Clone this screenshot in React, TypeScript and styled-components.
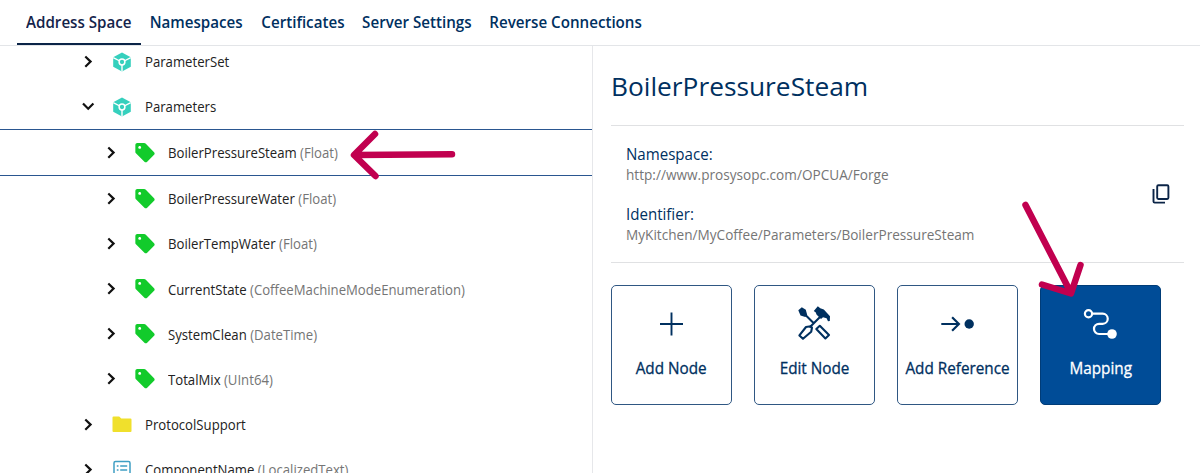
import React from "react";
import styled, { createGlobalStyle, css } from "styled-components";

const GlobalStyle = createGlobalStyle`
  * { box-sizing: border-box; }
  body {
    margin: 0;
    background: #fff;
    font-family: "Open Sans", "Noto Sans", sans-serif;
    overflow: hidden;
  }
`;

const Page = styled.div`
  position: relative;
  display: flex;
  flex-direction: column;
  height: 473px;
  overflow: hidden;
`;

const Condensed = styled.span<{ $scale: number; $origin?: string }>`
  display: inline-block;
  transform: scaleX(${(p) => p.$scale});
  transform-origin: ${(p) => p.$origin ?? "left"} center;
`;

const TabBar = styled.nav`
  display: flex;
  flex: none;
  height: 46px;
  padding-left: 17px;
  border-bottom: 1px solid #e3e5e8;
`;

const Tab = styled.a<{ $active?: boolean; $width: number }>`
  display: flex;
  justify-content: center;
  width: ${(p) => p.$width}px;
  height: 45px;
  padding-top: 11px;
  font-size: 16px;
  line-height: 22px;
  font-weight: 600;
  white-space: nowrap;
  color: ${(p) => (p.$active ? "#14244b" : "#00305f")};
  border-bottom: 2px solid ${(p) => (p.$active ? "#0b2447" : "transparent")};
`;

const Content = styled.div`
  display: flex;
  flex: 1;
  min-height: 0;
`;

const Tree = styled.div`
  flex: none;
  width: 593px;
  border-right: 1.5px solid #e6e7ea;
  overflow: hidden;
`;

const TreeList = styled.div`
  margin-top: -7px;
`;

const Row = styled.div<{ $level: number; $selected?: boolean }>`
  display: flex;
  align-items: center;
  height: ${(p) => (p.$selected ? 47 : 45.15)}px;
  padding-left: ${(p) => 76.8 + p.$level * 22.7}px;
  ${(p) =>
    p.$selected &&
    css`
      border-top: 1px solid #2a5690;
      border-bottom: 1px solid #2a5690;
    `}
`;

const Chevron = styled.svg`
  flex: none;
  width: 22px;
  height: 22px;
  margin-right: 12px;
  fill: none;
  stroke: #111;
  stroke-width: 2.2;
`;

const NodeIcon = styled.svg`
  flex: none;
  width: 22px;
  height: 22px;
  margin-right: 12px;
`;

const NodeLabel = styled.span`
  padding-top: 1px;
  font-size: 14px;
  line-height: 20px;
  color: #222;
  white-space: nowrap;
  transform: scaleX(0.94);
  transform-origin: left center;
`;

const TypeName = styled.span`
  color: #757575;
`;

const Details = styled.section`
  flex: 1;
  padding: 0 16px 0 18px;
`;

const Title = styled.h1`
  margin: 0;
  height: 80px;
  padding-top: 22px;
  font-size: 26.3px;
  line-height: 36px;
  font-weight: 400;
  color: #00305f;
  border-bottom: 1px solid #e0e1e3;
`;

const Info = styled.div`
  display: flex;
  justify-content: space-between;
  align-items: center;
  height: 136.5px;
  padding: 0 13px 0 15px;
  border-bottom: 1px solid #e0e1e3;
`;

const Fields = styled.dl`
  display: grid;
  gap: 20px;
  margin: 0;
`;

const Term = styled.dt`
  font-size: 16px;
  line-height: 21px;
  color: #00305f;
`;

const Value = styled.dd`
  margin: 0;
  font-size: 14px;
  line-height: 19px;
  color: #757575;
`;

const CopyIcon = styled.svg`
  width: 20px;
  height: 22px;
  fill: none;
  stroke: #0b2447;
`;

const Actions = styled.div`
  display: flex;
  gap: 22.5px;
  padding-top: 22.5px;
`;

const Action = styled.button<{ $primary?: boolean }>`
  display: flex;
  flex-direction: column;
  align-items: center;
  flex: none;
  width: 120.5px;
  height: 120px;
  padding: 17.5px 0 0;
  border: 1px solid ${(p) => (p.$primary ? "#003c78" : "#2f5783")};
  border-radius: 5px;
  background: ${(p) => (p.$primary ? "#004c97" : "#fff")};
  color: ${(p) => (p.$primary ? "#fff" : "#00305f")};
  font-family: inherit;
  font-size: 16px;
  font-weight: 400;
  -webkit-text-stroke: 0.3px currentColor;
  line-height: 22px;
  white-space: nowrap;
`;

const ActionIcon = styled.svg`
  width: 40px;
  height: 40px;
  margin-bottom: 13px;
  fill: none;
  stroke: currentColor;
`;

const Arrows = styled.svg`
  position: absolute;
  inset: 0;
  width: 1200px;
  height: 473px;
  fill: none;
  stroke: #c1004f;
  stroke-width: 6.5;
  stroke-linecap: round;
  stroke-linejoin: round;
  pointer-events: none;
`;

type Kind = "object" | "variable" | "folder" | "property";

function Glyph({ kind }: { kind: Kind }) {
  if (kind === "object")
    return (
      <NodeIcon viewBox="0 0 22 22">
        <path d="M11 1.6 19.8 6.3V15.7L11 20.4 2.2 15.7V6.3Z" fill="#35d0bd" />
        <path d="M2.2 6.6 8.8 10M19.8 6.6 13.2 10M11 13.5V20.5" stroke="#fff" strokeWidth="1.4" fill="none" />
        <circle cx="11" cy="11" r="2.9" fill="#35d0bd" stroke="#fff" strokeWidth="1.5" />
      </NodeIcon>
    );
  if (kind === "variable")
    return (
      <NodeIcon viewBox="0.6 0.9 22.8 22.8">
        <path
          fill="#12cb2b"
          d="M21.41 11.41l-8.83-8.83c-.37-.37-.88-.58-1.41-.58H4c-1.1 0-2 .9-2 2v7.17c0 .53.21 1.04.59 1.41l8.83 8.83c.78.78 2.05.78 2.83 0l7.17-7.17c.78-.78.78-2.04-.01-2.83zM6.5 8C5.67 8 5 7.33 5 6.5S5.67 5 6.5 5 8 5.67 8 6.5 7.33 8 6.5 8z"
        />
      </NodeIcon>
    );
  if (kind === "folder")
    return (
      <NodeIcon viewBox="0 0 22 22">
        <path d="M1.5 3.4Q1.5 2.4 2.5 2.4H8.2L10.3 4.4H19.5Q20.5 4.4 20.5 5.4V17Q20.5 18 19.5 18H2.5Q1.5 18 1.5 17Z" fill="#f0e02c" />
      </NodeIcon>
    );
  return (
    <NodeIcon viewBox="0 0 22 22" fill="none" stroke="#3f9fc4" strokeWidth="1.5">
      <rect x="3" y="2.6" width="16" height="16.5" rx="1.5" />
      <path d="M5.8 7H7.5M5.8 10.9H7.5M5.8 14.8H7.5M9.2 7H16.2M9.2 10.9H16.2M9.2 14.8H16.2" />
    </NodeIcon>
  );
}

const nodes: { name: string; type?: string; kind: Kind; level: number; open?: boolean; selected?: boolean }[] = [
  { name: "ParameterSet", kind: "object", level: 0 },
  { name: "Parameters", kind: "object", level: 0, open: true },
  { name: "BoilerPressureSteam", type: "Float", kind: "variable", level: 1, selected: true },
  { name: "BoilerPressureWater", type: "Float", kind: "variable", level: 1 },
  { name: "BoilerTempWater", type: "Float", kind: "variable", level: 1 },
  { name: "CurrentState", type: "CoffeeMachineModeEnumeration", kind: "variable", level: 1 },
  { name: "SystemClean", type: "DateTime", kind: "variable", level: 1 },
  { name: "TotalMix", type: "UInt64", kind: "variable", level: 1 },
  { name: "ProtocolSupport", kind: "folder", level: 0 },
  { name: "ComponentName", type: "LocalizedText", kind: "property", level: 0 },
];

const tabs = [
  { label: "Address Space", width: 124, active: true },
  { label: "Namespaces", width: 111 },
  { label: "Certificates", width: 101 },
  { label: "Server Settings", width: 128 },
  { label: "Reverse Connections", width: 170 },
];

const fields = [
  { term: "Namespace:", value: "http://www.prosysopc.com/OPCUA/Forge" },
  { term: "Identifier:", value: "MyKitchen/MyCoffee/Parameters/BoilerPressureSteam" },
];

function ActionLabel({ children }: { children: React.ReactNode }) {
  return (
    <Condensed $scale={0.955} $origin="center">
      {children}
    </Condensed>
  );
}

export default function App() {
  return (
    <>
      <GlobalStyle />
      <Page>
        <TabBar>
          {tabs.map((t) => (
            <Tab key={t.label} $active={t.active} $width={t.width}>
              <Condensed $scale={0.946} $origin="center">
                {t.label}
              </Condensed>
            </Tab>
          ))}
        </TabBar>
        <Content>
          <Tree>
            <TreeList>
              {nodes.map((n) => (
                <Row key={n.name} $level={n.level} $selected={n.selected}>
                  <Chevron viewBox="0 0 22 22">
                    <path d={n.open ? "M6 7.5 11.2 12.7 16.4 7.5" : "M8.3 5.5 13.6 10.6 8.3 15.7"} />
                  </Chevron>
                  <Glyph kind={n.kind} />
                  <NodeLabel>
                    {n.name} {n.type && <TypeName>({n.type})</TypeName>}
                  </NodeLabel>
                </Row>
              ))}
            </TreeList>
          </Tree>
          <Details>
            <Title>BoilerPressureSteam</Title>
            <Info>
              <Fields>
                {fields.map((f) => (
                  <div key={f.term}>
                    <Term>
                      <Condensed $scale={0.943}>{f.term}</Condensed>
                    </Term>
                    <Value>
                      <Condensed $scale={0.972}>{f.value}</Condensed>
                    </Value>
                  </div>
                ))}
              </Fields>
              <CopyIcon viewBox="0 0 20 22" strokeWidth="1.9">
                <rect x="6.2" y="2.2" width="11.2" height="13.8" rx="1.2" />
                <path d="M2.5 6V18.4Q2.5 19.6 3.7 19.6H14" />
              </CopyIcon>
            </Info>
            <Actions>
              <Action>
                <ActionIcon viewBox="0 0 40 40" strokeWidth="1.9">
                  <path d="M20.5 8.5V31.5M9 20H32" />
                </ActionIcon>
                <ActionLabel>Add Node</ActionLabel>
              </Action>
              <Action>
                <ActionIcon viewBox="0 0 40 40" strokeWidth="2.1">
                  <path d="M10 9.5 20.5 20M27.5 11.5 15.5 23.5" />
                  <path d="M4.3 6.3 7.8 3.2 11.8 5.8 13.2 11 11.3 13 6.5 11.5Z" fill="currentColor" stroke="none" />
                  <path d="M19.8 7 23.8 2.2 26.3 4.2 29.8 5.5 36 12.2 35.8 17 34 17.2 32.6 14.3 29 13.2 27 15 22.5 10.5 21.8 8.5Z" fill="currentColor" stroke="none" />
                  <path d="M5.4 31.4 12 23 16.8 22.3 18 23.6 17.2 27.8 9 34.8Z" strokeLinejoin="round" />
                  <path d="M22.3 25 25.8 21.8 35 31 31.4 34.4Z" strokeLinejoin="round" />
                </ActionIcon>
                <ActionLabel>Edit Node</ActionLabel>
              </Action>
              <Action>
                <ActionIcon viewBox="0 0 40 40" strokeWidth="2.2">
                  <path d="M4.3 20H21.5M15.1 13.2 21.9 20 15.1 26.8" />
                  <circle cx="32.2" cy="20" r="4.7" fill="currentColor" stroke="none" />
                </ActionIcon>
                <ActionLabel>Add Reference</ActionLabel>
              </Action>
              <Action $primary>
                <ActionIcon viewBox="0 0 40 40" strokeWidth="2.2">
                  <circle cx="8.5" cy="9.7" r="3.6" />
                  <path d="M12.1 9.7H22.7A5 5 0 0 1 22.7 19.8H19.1A5.1 5.1 0 0 0 19.1 30H29.5" />
                  <circle cx="32" cy="30" r="4.8" fill="currentColor" stroke="none" />
                </ActionIcon>
                <ActionLabel>Mapping</ActionLabel>
              </Action>
            </Actions>
          </Details>
        </Content>
        <Arrows viewBox="0 0 1200 473">
          <path d="M375 134 354 155 375.5 176M355 155 452 154.3" />
          <path d="M1025.5 205 1071 293M1042 284.5 1071 293.5 1080.5 265" />
        </Arrows>
      </Page>
    </>
  );
}
